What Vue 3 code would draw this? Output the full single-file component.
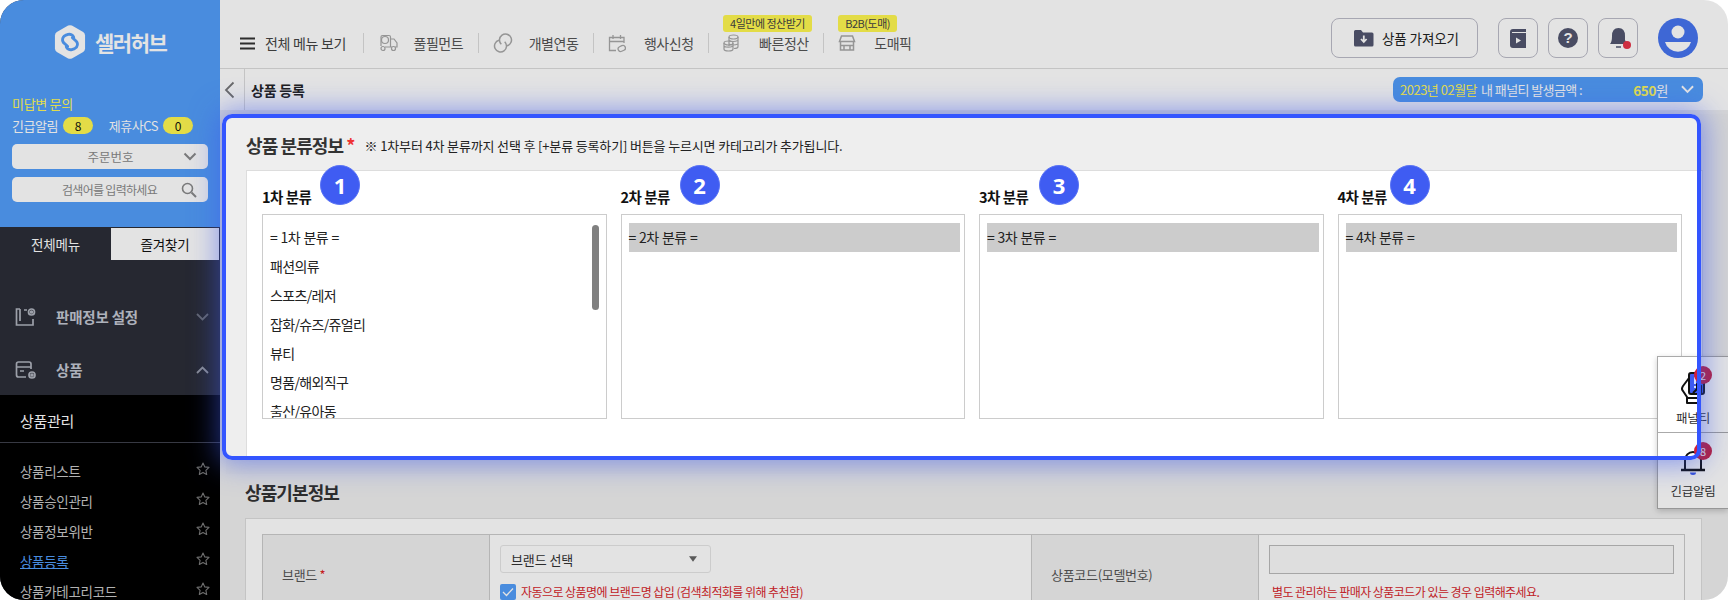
<script setup>
const topItems = [
  { label: '풀필먼트', icon: 'truck' },
  { label: '개별연동', icon: 'link' },
  { label: '행사신청', icon: 'cal' },
  { label: '빠른정산', icon: 'coin', tag: '4일만에 정산받기' },
  { label: '도매픽', icon: 'shop', tag: 'B2B(도매)' }
]
const subItems = [
  { label: '상품리스트' },
  { label: '상품승인관리' },
  { label: '상품정보위반' },
  { label: '상품등록', active: true },
  { label: '상품카테고리코드' }
]
const firstList = ['= 1차 분류 =', '패션의류', '스포츠/레저', '잡화/슈즈/쥬얼리', '뷰티', '명품/해외직구', '출산/유아동']
const columns = [
  { n: 1, x: 58, title: '1차 분류', items: firstList },
  { n: 2, x: 59, title: '2차 분류', selected: '= 2차 분류 =' },
  { n: 3, x: 60, title: '3차 분류', selected: '= 3차 분류 =' },
  { n: 4, x: 52, title: '4차 분류', selected: '= 4차 분류 =' }
]
</script>

<template>
  <div class="frame">
    <aside class="side">
      <div class="side-top">
        <div class="logo">
          <svg width="32" height="36" viewBox="0 0 34 38">
            <path d="M15 1.6 Q17 .6 19 1.6 L31 8.4 Q33 9.6 33 12 V26 Q33 28.4 31 29.6 L19 36.4 Q17 37.4 15 36.4 L3 29.6 Q1 28.4 1 26 V12 Q1 9.6 3 8.4 Z" fill="#fff"/>
            <path d="M14.500 23.500 L11 20.500 A5 5 0 0 1 12 12 L15 11 A5 5 0 0 1 21 14" fill="none" stroke="#539EFA" stroke-width="3" stroke-linecap="round"/>
            <path d="M19.500 14.500 L23 17.500 A5 5 0 0 1 22 26 L19 27 A5 5 0 0 1 13 24" fill="none" stroke="#539EFA" stroke-width="3" stroke-linecap="round"/>
          </svg>
          <span>셀러허브</span>
        </div>
        <div class="inquiry">미답변 문의</div>
        <div class="alerts">
          <span>긴급알림</span><b class="pill">8</b>
          <span class="second">제휴사CS</span><b class="pill">0</b>
        </div>
        <div class="field">
          <span class="field-text order">주문번호</span>
          <svg width="14" height="9" viewBox="0 0 14 9"><path d="M1.500 1.500 7 7l5.500-5.500" fill="none" stroke="#8a8a8a" stroke-width="2"/></svg>
        </div>
        <div class="field">
          <span class="field-text search">검색어를 입력하세요</span>
          <svg width="16" height="16" viewBox="0 0 16 16"><circle cx="6.500" cy="6.500" r="5" fill="none" stroke="#8a8a8a" stroke-width="1.600"/><path d="m10.500 10.500 4.500 4.500" stroke="#8a8a8a" stroke-width="2"/></svg>
        </div>
      </div>
      <div class="tabs">
        <div class="tab">전체메뉴</div>
        <div class="tab on">즐겨찾기</div>
      </div>
      <nav class="nav">
        <div class="nav-row">
          <svg width="22" height="20" viewBox="0 0 22 20" fill="none" stroke="#b0b4be" stroke-width="1.700"><path d="M5 2H1.500v16H18v-6M5 2v12M9 3h3"/><circle cx="16.500" cy="5" r="3"/><circle cx="16.500" cy="5" r="1" fill="#b0b4be"/></svg>
          <span>판매정보 설정</span>
          <svg class="chev" width="13" height="8" viewBox="0 0 13 8"><path d="M1 1l5.500 5.500L12 1" fill="none" stroke="#70747f" stroke-width="1.800"/></svg>
        </div>
        <div class="nav-row">
          <svg width="22" height="20" viewBox="0 0 22 20" fill="none" stroke="#b0b4be" stroke-width="1.700"><path d="M11 17H3.500Q1.500 17 1.500 15V4Q1.500 2 3.500 2H14Q16 2 16 4V9M1.500 7H16M5 11h4"/><circle cx="17" cy="15" r="3"/><circle cx="17" cy="15" r="1" fill="#b0b4be"/></svg>
          <span>상품</span>
          <svg class="chev" width="13" height="8" viewBox="0 0 13 8"><path d="M1 7l5.500-5.500L12 7" fill="none" stroke="#9a9ea8" stroke-width="1.800"/></svg>
        </div>
      </nav>
      <div class="sub">
        <div class="sub-head">상품관리</div>
        <ul class="sub-list">
          <li v-for="s in subItems" :key="s.label" :class="{ active: s.active }">
            <span>{{ s.label }}</span>
            <svg width="14" height="14" viewBox="0 0 14 14"><path d="M7 1l1.800 3.900 4.200.5-3.100 2.900.8 4.200L7 10.400l-3.700 2.100.8-4.200L1 5.400l4.200-.5z" fill="none" stroke="#7c7c7c" stroke-width="1.100" stroke-linejoin="round"/></svg>
          </li>
        </ul>
      </div>
    </aside>

    <main class="main">
      <header class="topbar">
        <div class="menu-all">
          <svg width="15" height="13" viewBox="0 0 15 13"><path d="M0 1.500h15M0 6.500h15M0 11.500h15" stroke="#333" stroke-width="2"/></svg>
          <span>전체 메뉴 보기</span>
        </div>
        <div v-for="t in topItems" :key="t.label" class="top-item">
          <span v-if="t.tag" class="tag">{{ t.tag }}</span>
          <svg v-if="t.icon === 'truck'" width="20" height="18" viewBox="0 0 20 18" fill="none" stroke="#a8a8a8" stroke-width="1.200"><path d="M3 12V3Q3 1.500 4.500 1.500H11Q12.500 1.500 12.500 3V13H7M12.500 5H16l3 4v4h-2M12.500 13H14"/><circle cx="7" cy="6" r="3.500"/><circle cx="5" cy="14.500" r="2"/><circle cx="15.500" cy="14.500" r="2"/></svg>
          <svg v-else-if="t.icon === 'link'" width="20" height="20" viewBox="0 0 20 20" fill="none" stroke="#a8a8a8" stroke-width="1.500"><path d="M8.300 11.300A6 6 0 1 1 14 12.800"/><path d="M11.700 8.700A6 6 0 1 1 6 7.200"/></svg>
          <svg v-else-if="t.icon === 'cal'" width="18" height="19" viewBox="0 0 18 19" fill="none" stroke="#a8a8a8" stroke-width="1.300"><path d="M8 16.500H1.500V3.500H16V9M1.500 7.500H16M5 1v4M12.500 1v4"/><rect x="10" y="12" width="7.500" height="5" rx="2.500" transform="rotate(-25 13.700 14.500)"/></svg>
          <svg v-else-if="t.icon === 'coin'" width="16" height="18" viewBox="0 0 16 18" fill="none" stroke="#a8a8a8" stroke-width="1.200"><ellipse cx="10.500" cy="3" rx="4.500" ry="2"/><path d="M6 3v9M15 3v9.500Q15 14.500 11 14.500M6 6.500Q10 8.500 15 6.500M6 10Q10 12 15 10"/><ellipse cx="5.500" cy="9" rx="4.500" ry="2"/><path d="M1 9v6Q1 17 5.500 17T10 15V9M1 12.200Q5 14.200 10 12.200"/></svg>
          <svg v-else width="18" height="16" viewBox="0 0 18 16" fill="none" stroke="#a8a8a8" stroke-width="1.500"><path d="M3.500 1h11l2 5.500H1.500zM2.500 6.500V15H15.500V6.500M2.500 10.500H15.500M6 15v-4.500M12 15v-4.500"/></svg>
          <span class="top-label">{{ t.label }}</span>
        </div>
        <div class="top-right">
          <button class="import">
            <svg width="21" height="18" viewBox="0 0 21 18"><path d="M1 2.500Q1 1 2.500 1H8l2 2.500h9Q20.500 3.500 20.500 5V16Q20.500 17.500 19 17.500H2.500Q1 17.500 1 16Z" fill="#525670"/><path d="M10.800 6.500v6M8 10l2.800 3 2.800-3" fill="none" stroke="#fff" stroke-width="1.800"/></svg>
            <span>상품 가져오기</span>
          </button>
          <button class="sq">
            <svg width="16" height="19" viewBox="0 0 16 19"><path d="M0 3Q0 0 3 0H16V3H2V4H16V19H3Q0 19 0 16Z" fill="#525670"/><path d="M6 8.500v6l5-3z" fill="#fff"/></svg>
          </button>
          <button class="sq">
            <svg width="20" height="20" viewBox="0 0 20 20"><circle cx="10" cy="10" r="10" fill="#525670"/><text x="10" y="15" text-anchor="middle" class="qmark">?</text></svg>
          </button>
          <button class="sq">
            <svg width="24" height="24" viewBox="0 0 24 24" overflow="visible"><path d="M4 18Q6 16 6 10Q6 2 12.500 2Q19 2 19 10V14L21 18Z" fill="#525670"/><path d="M10 21h5" stroke="#525670" stroke-width="1.500"/><circle cx="21" cy="19" r="4" fill="#e8344a"/></svg>
          </button>
          <div class="avatar">
            <svg width="40" height="40" viewBox="0 0 40 40"><circle cx="20" cy="20" r="20" fill="#4674f0"/><circle cx="20" cy="14" r="6.500" fill="#fff"/><path d="M7 24H33A13.500 13.500 0 0 1 7 24Z" fill="#fff"/></svg>
          </div>
        </div>
      </header>

      <div class="subbar">
        <button class="back">
          <svg width="11" height="18" viewBox="0 0 11 18"><path d="M9.500 1.500 2 9l7.500 7.500" fill="none" stroke="#777" stroke-width="1.800"/></svg>
        </button>
        <strong>상품 등록</strong>
        <div class="penalty">
          <span class="yellow pen-date">2023년 02월달</span>
          <span class="pen-label">내 패널티 발생금액 :</span>
          <span class="pen-amount"><b class="yellow">650</b>원</span>
          <svg class="pen-chev" width="13" height="9" viewBox="0 0 14 9"><path d="M1 1l6 6 6-6" fill="none" stroke="#fff" stroke-width="2"/></svg>
        </div>
      </div>

      <div class="content">
        <section class="cat">
          <div class="cat-head">
            <h2>상품 분류정보 <em>*</em></h2>
            <p>※ 1차부터 4차 분류까지 선택 후 [+분류 등록하기] 버튼을 누르시면 카테고리가 추가됩니다.</p>
          </div>
          <div class="cat-card">
            <div v-for="c in columns" :key="c.n" class="col">
              <span class="step" :style="{ left: c.x + 'px' }">{{ c.n }}</span>
              <h3>{{ c.title }}</h3>
              <div class="list">
                <template v-if="c.items">
                  <div v-for="i in c.items" :key="i" class="opt">{{ i }}</div>
                  <i class="thumb"></i>
                </template>
                <div v-else class="opt sel">{{ c.selected }}</div>
              </div>
            </div>
          </div>
        </section>

        <h2 class="basic-title">상품기본정보</h2>
        <div class="basic-card">
          <div class="basic-table">
            <div class="th">브랜드 <em>*</em></div>
            <div class="td">
              <div class="brand-select">
                <span>브랜드 선택</span>
                <svg width="8" height="6" viewBox="0 0 10 7"><path d="M0 0h10L5 7z" fill="#666"/></svg>
              </div>
              <div class="check-row">
                <span class="check"><svg width="12" height="10" viewBox="0 0 12 10"><path d="M1 5l3.500 3.500L11 1.500" fill="none" stroke="#fff" stroke-width="1.300"/></svg></span>
                <span class="red">자동으로 상품명에 브랜드명 삽입 (검색최적화를 위해 추천함)</span>
              </div>
            </div>
            <div class="th">상품코드(모델번호)</div>
            <div class="td">
              <div class="code-input"></div>
              <div class="red code-note">별도 관리하는 판매자 상품코드가 있는 경우 입력해주세요.</div>
            </div>
          </div>
        </div>
      </div>
    </main>

    <aside class="float">
      <div class="float-item">
        <svg width="24" height="32" viewBox="0 0 24 32" fill="none" stroke="#111" stroke-width="2" stroke-linejoin="round">
          <rect x="8" y="1" width="15" height="21" rx="2" fill="#3d5af1"/>
          <path d="M8 6 2 14Q0 17 2 19L6 25V31H17V25Q20 23 20 20V14L16 12V17L12 21"/>
          <path d="M6 26H17"/>
          <path d="M14 5v7M14 14v2" stroke="#fff" stroke-width="1.600"/>
        </svg>
        <span>패널티</span>
        <b class="float-badge">2</b>
      </div>
      <div class="float-item">
        <svg width="26" height="26" viewBox="0 0 26 26" fill="none" stroke="#111" stroke-width="2">
          <path d="M5 20V11A8 8 0 0 1 21 11V20"/>
          <path d="M1 21H25" stroke-width="2.500"/>
          <path d="M10 23.500A3 2.500 0 0 0 16 23.500Z" fill="#3d5af1" stroke="none"/>
        </svg>
        <span>긴급알림</span>
        <b class="float-badge">8</b>
      </div>
    </aside>

    <div class="focus"></div>
  </div>
</template>

<style>
html, body { margin: 0; background: #fff; }
</style>

<style scoped>
* { box-sizing: border-box; }
h2, h3, p, ul { margin: 0; padding: 0; }
button { font: inherit; background: none; cursor: pointer; }
.frame {
  position: relative;
  display: flex;
  width: 1728px;
  height: 600px;
  overflow: hidden;
  border-radius: 24px;
  background: #fff;
  font-family: "Noto Sans CJK KR", "Noto Sans", sans-serif;
  color: #222;
}
.side {
  flex: 0 0 220px;
  display: flex;
  flex-direction: column;
  background: #2b2e38;
}
.side > * { flex: none; }
.side-top {
  height: 227px;
  padding: 24px 12px 0 12px;
  background: #539efa;
}
.logo {
  display: flex;
  align-items: center;
  gap: 9px;
  height: 36px;
  padding-left: 42px;
  color: #fff;
  font-size: 21px;
  font-weight: 700;
  letter-spacing: -1.500px;
}
.inquiry { margin-top: 35px; font-size: 13px; line-height: 18px; color: #fdf657; letter-spacing: -.3px; }
.alerts { display: flex; align-items: center; gap: 5px; margin-top: 3px; height: 18px; color: #fff; font-size: 13px; letter-spacing: -.5px; }
.alerts .second { margin-left: 11px; }
.pill { width: 30px; height: 17px; border-radius: 9px; background: #fff850; color: #111; font-size: 12px; font-weight: 400; text-align: center; line-height: 17px; }
.field { display: flex; align-items: center; justify-content: flex-end; height: 25px; margin-top: 8px; padding: 0 11px 0 0; border-radius: 5px; background: #fff; }
.alerts + .field { margin-top: 10px; }
.field-text { flex: 1; font-size: 12.500px; color: #8a8a8a; text-align: center; }
.order { padding-left: 26px; }
.search { padding-left: 26px; font-size: 12px; letter-spacing: -.7px; }
.tabs { display: flex; height: 33px; padding-top: 1px; }
.tab { flex: 0 0 111px; color: #fff; font-size: 13.500px; line-height: 32px; text-align: center; letter-spacing: -.2px; }
.tab.on { flex-basis: 108px; background: #fff; color: #111; }
.nav { height: 135px; padding-top: 30px; }
.nav-row { display: flex; align-items: center; height: 53px; padding: 0 11px 0 15px; color: #c3c7d2; font-size: 14.500px; font-weight: 700; letter-spacing: -.2px; }
.nav-row span { margin-left: 19px; }
.chev { margin-left: auto; }
.sub { flex: 1; background: #000; }
.sub-head { height: 48px; padding: 0 20px; border-bottom: 1px solid #3e414c; color: #fff; font-size: 15px; line-height: 52px; letter-spacing: -.3px; }
.sub-list { list-style: none; padding: 13px 10px 0 20px; }
.sub-list li { display: flex; justify-content: space-between; align-items: center; height: 30px; color: #c8c8c8; font-size: 13.500px; letter-spacing: -.3px; }
.sub-list li svg { margin-top: -4px; }
.sub-list li.active span { color: #539efa; text-decoration: underline; }
.main { flex: 1; display: flex; flex-direction: column; min-width: 0; }
.topbar {
  flex: 0 0 69px;
  display: flex;
  align-items: center;
  padding: 0 30px 0 20px;
  border-bottom: 1px solid #ddd;
  background: #fff;
}
.menu-all { display: flex; align-items: center; gap: 10px; width: 122.500px; height: 20px; margin-top: 18px; font-size: 14px; color: #444; letter-spacing: -.3px; }
.top-item { position: relative; display: flex; align-items: center; width: 115.200px; height: 20px; margin-top: 18px; padding-left: 14px; border-left: 1px solid #ddd; color: #555; font-size: 14px; letter-spacing: -.45px; }
.top-label { position: absolute; left: 50px; white-space: nowrap; }
.tag { position: absolute; left: 14px; top: -18px; height: 17px; padding: 0 7px; border-radius: 3px; background: #fff850; color: #444; font-size: 11px; line-height: 17px; white-space: nowrap; letter-spacing: -.5px; }
.top-right { display: flex; align-items: center; gap: 10px; margin-left: auto; margin-top: 8px; }
.import { display: flex; align-items: center; gap: 8px; width: 147px; height: 40px; margin-right: 10px; padding: 0 0 0 21px; border: 1px solid #bcbcc8; border-radius: 8px; font-size: 13.500px; color: #222; letter-spacing: -.1px; }
.sq { display: flex; align-items: center; justify-content: center; width: 40px; height: 40px; padding: 0; border: 1px solid #bcbcc8; border-radius: 8px; }
.qmark { fill: #fff; font-size: 15px; font-weight: 700; font-family: "Liberation Sans", sans-serif; }
.avatar { width: 40px; height: 40px; margin-left: 10px; }
.subbar { flex: 0 0 41px; display: flex; align-items: center; padding-right: 25px; background: #fff; }
.back { display: flex; align-items: center; justify-content: flex-start; width: 25px; height: 100%; padding: 0 0 0 4px; border: 0; border-right: 1px solid #ddd; }
.subbar strong { margin-left: 6px; font-size: 14px; color: #222; letter-spacing: -.2px; }
.penalty { display: flex; align-items: center; width: 310px; height: 25px; margin-left: auto; padding: 0 9px 0 7px; border-radius: 7px; background: #539efa; color: #fff; font-size: 13px; letter-spacing: -.6px; }
.pen-date { letter-spacing: -.5px; }
.pen-label { margin-left: 4px; }
.pen-amount { margin-left: auto; margin-right: 13px; font-size: 13.500px; letter-spacing: -.4px; }
.pen-chev { flex: none; }
.yellow { color: #fdf657; }
.content { flex: 1; padding: 0 0 0 2px; background: #f0f0f0; min-height: 0; }
.cat { height: 360px; margin: 4px 0 0 4px; padding-top: 0; background: #eee; }
.cat-head { display: flex; align-items: center; gap: 10px; height: 56px; padding: 6px 0 0 20px; }
.cat-head h2 { font-size: 18px; font-weight: 700; color: #333; letter-spacing: -.9px; }
.cat-head em { color: #e33; font-style: normal; }
.cat-head p { font-size: 13px; color: #222; letter-spacing: -.15px; }
.cat-card { display: grid; grid-template-columns: repeat(4, 344.500px); gap: 14px; width: 1457px; height: 290px; margin-left: 20px; padding: 0 0 0 15px; border: 1px solid #ddd; background: #fff; }
.col { position: relative; padding-top: 13px; }
.col h3 { height: 30px; font-size: 14.500px; line-height: 26px; color: #111; font-weight: 700; letter-spacing: -.5px; }
.step { position: absolute; top: -6px; width: 40px; height: 40px; border-radius: 50%; border: 1px solid #5a74f5; background: #3f5cf2; color: #fff; font: 700 22px/38px "Noto Sans", sans-serif; text-align: center; }
.list { position: relative; height: 205px; padding: 8px 4px 8px 7px; border: 1px solid #ccc; overflow: hidden; background: #fff; }
.opt { height: 29px; font-size: 14px; line-height: 29px; color: #222; letter-spacing: -.65px; word-spacing: 1px; }
.opt.sel { background: #ccc; }
.thumb { position: absolute; top: 10px; right: 7px; width: 7px; height: 85px; border-radius: 4px; background: #808080; }
.basic-title { margin: 4px 0 0 23px; font-size: 18px; line-height: 28px; font-weight: 700; color: #333; letter-spacing: -.9px; }
.basic-card { width: 1457px; height: 100px; margin: 12px 0 0 23px; padding: 15px 16px 0 16px; border: 1px solid #ddd; background: #fff; }
.basic-table { display: grid; grid-template-columns: 227px 542px 227px 1fr; height: 90px; border: 1px solid #ccc; }
.th { padding: 31px 0 0 19px; background: #f0f0f0; border-right: 1px solid #ccc; color: #555; font-size: 13px; line-height: 18px; letter-spacing: -.3px; }
.th em { color: #d22; font-style: normal; }
.td { padding: 10px 10px 0 10px; border-right: 1px solid #ccc; }
.td:last-child { border-right: 0; }
.brand-select { display: flex; align-items: center; justify-content: space-between; width: 211px; height: 28px; padding: 0 13px 0 10px; border: 1px solid #e6e6e6; border-radius: 3px; font-size: 13px; color: #333; letter-spacing: -.1px; }
.check-row { display: flex; align-items: center; gap: 5px; margin-top: 10px; }
.check { display: flex; align-items: center; justify-content: center; width: 16px; height: 16px; border-radius: 2px; background: #539efa; }
.red { color: #d8262c; font-size: 12px; letter-spacing: -.55px; }
.code-input { height: 29px; border: 1px solid #bbb; background: #fafafa; }
.code-note { margin-top: 9px; padding-left: 3px; line-height: 18px; }
.float { position: absolute; left: 1657px; top: 356px; width: 71px; height: 153px; border: 1px solid #aaa; border-right: 0; background: #fff; box-shadow: 0 2px 6px rgba(0,0,0,.2); }
.float-item { position: relative; display: flex; flex-direction: column; align-items: center; height: 75px; padding-top: 15px; font-size: 12.500px; color: #333; letter-spacing: -.2px; }
.float-item + .float-item { height: 76px; border-top: 1px solid #aaa; padding-top: 16px; }
.float-item span { position: absolute; left: 0; right: 0; top: 52px; text-align: center; line-height: 18px; }
.float-item + .float-item span { top: 49px; }
.float-badge { position: absolute; left: 36px; top: 9px; width: 18px; height: 18px; border-radius: 50%; background: #d0203c; color: #fff; font-size: 11px; font-weight: 400; line-height: 18px; text-align: center; }
.focus {
  position: absolute;
  left: 222px;
  top: 114px;
  width: 1479px;
  height: 346px;
  border: 4px solid #3355ff;
  border-radius: 10px;
  box-shadow: 0 0 28px 4px rgba(61, 90, 241, .55), 0 0 0 3000px rgba(0, 0, 0, .11);
  pointer-events: none;
}
</style>
